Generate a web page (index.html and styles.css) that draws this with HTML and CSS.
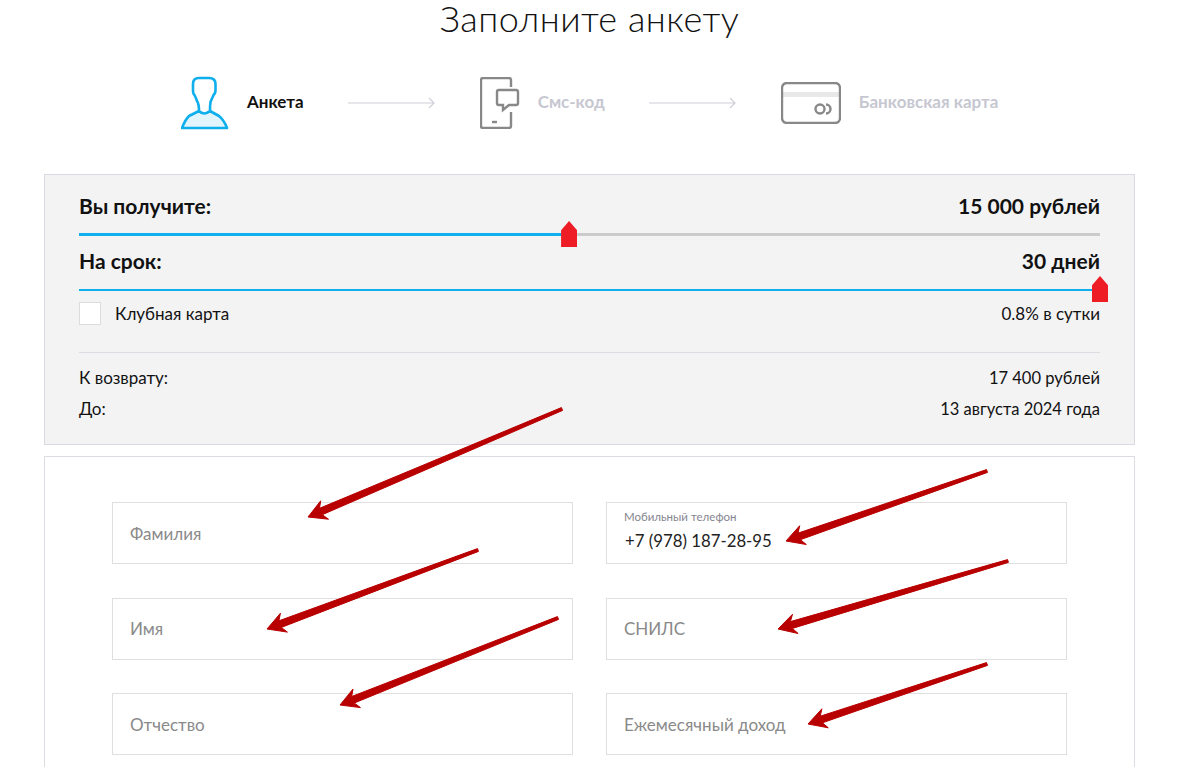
FILE: index.html
```html
<!DOCTYPE html>
<html>
<head>
    <meta charset="utf-8">
    <link rel="stylesheet" href="styles.css">
</head>
<body>
    <div class="page">
        <h1 class="title">Заполните анкету</h1>

        <div class="steps">
            <svg class="icon-person" viewBox="0 0 50 54">
                <path class="person-fill" d="M18 35 Q23 40 29 35 L38 40 Q43 44 46 52 L1 52 Q4 44 8 40 Z"/>
                <path class="icon-blue" d="M18 35 C18 31 18 28 16 25 C15 22 14 20 13.5 19 C12 18 12 16 12 14 L12 8 C12 4 14 2 18 2 L28 2 C32 2 34.5 4 34.5 8 L34.5 14 C34.5 17 34 18 32.5 19 C31.5 22 30 24 29.5 26 C29 29 29 32 29 35 L38 40 Q43 44 46 52 L1 52 Q4 44 8 40 L18 35 Q23 40 29 35"/>
            </svg>
            <span class="step-name active">Анкета</span>
            <svg class="step-arrow" viewBox="0 0 88 12">
                <path d="M0 6 H86 M81 1 L86 6 L81 11"/>
            </svg>
            <svg class="icon-phone" viewBox="0 0 40 52">
                <path class="icon-gray" d="M31 10 V3 Q31 1 29 1 H3 Q1 1 1 3 V49 Q1 51 3 51 H29 Q31 51 31 49 V35"/>
                <path class="icon-gray" d="M19 13 H36 Q38 13 38 15 V26 Q38 28 36 28 H29 L23 33 V28 H19 Q17 28 17 26 V15 Q17 13 19 13 Z"/>
                <path class="icon-gray" d="M12 45 H17"/>
            </svg>
            <span class="step-name">Смс-код</span>
            <svg class="step-arrow" viewBox="0 0 88 12">
                <path d="M0 6 H86 M81 1 L86 6 L81 11"/>
            </svg>
            <svg class="icon-card" viewBox="0 0 60 42">
                <rect class="card-stripe" x="1" y="10" width="58" height="5"/>
                <rect class="icon-gray" x="1" y="1" width="58" height="40" rx="5"/>
                <circle class="icon-gray" cx="39" cy="27" r="4.5"/>
                <path class="icon-gray" d="M45 22.5 A4.5 4.5 0 0 1 45 31.5"/>
            </svg>
            <span class="step-name">Банковская карта</span>
        </div>

        <div class="summary">
            <div class="slider-head">
                <span>Вы получите:</span>
                <span>15 000 рублей</span>
            </div>
            <div class="track track-amount">
                <div class="track-fill" style="width: 48%"></div>
                <div class="thumb" style="left: 48%"></div>
            </div>
            <div class="slider-head second">
                <span>На срок:</span>
                <span>30 дней</span>
            </div>
            <div class="track track-term">
                <div class="track-fill" style="width: 100%"></div>
                <div class="thumb" style="left: 100%"></div>
            </div>
            <div class="club">
                <label class="club-label"><span class="checkbox"></span>Клубная карта</label>
                <span>0.8% в сутки</span>
            </div>
            <div class="totals">
                <div class="total-row">
                    <span>К возврату:</span>
                    <span class="total-value">17 400 рублей</span>
                </div>
                <div class="total-row">
                    <span>До:</span>
                    <span class="total-value">13 августа 2024 года</span>
                </div>
            </div>
        </div>

        <div class="form-card">
            <div class="form-grid">
                <div class="field">Фамилия</div>
                <div class="field field-filled">
                    <span class="field-label">Мобильный телефон</span>
                    <span class="field-value">+7 (978) 187-28-95</span>
                </div>
                <div class="field">Имя</div>
                <div class="field">СНИЛС</div>
                <div class="field">Отчество</div>
                <div class="field">Ежемесячный доход</div>
            </div>
        </div>

        <svg class="arrows" viewBox="0 0 1180 767">
            <polygon points="562.6,410.4 322.3,514.7 328.5,519.2 308,517 320.7,500.8 319.5,508.3 561.4,407.6"/>
            <polygon points="987.5,472.4 800.4,539.7 806.3,544.5 786,541 799.7,525.7 798.1,533.1 986.5,469.6"/>
            <polygon points="478.5,551.4 281.3,627.4 287.4,632.1 267,629 280.4,613.3 278.9,620.8 477.5,548.6"/>
            <polygon points="1008.4,562.4 792.4,628.4 798.1,633.5 778,629 792.5,614.3 790.4,621.6 1007.6,559.6"/>
            <polygon points="558.6,619.4 354.3,703 360.4,707.6 340,705 353,689 351.7,696.5 557.4,616.6"/>
            <polygon points="987.5,665.4 822.4,722.8 828.3,727.8 808,724 821.9,708.8 820.2,716.2 986.5,662.6"/>
        </svg>
    </div>
</body>
</html>
```

FILE: styles.css
```css
body {
    margin: 0;
    background-color: #fff;
    font-family: "Lato", "Noto Sans", sans-serif;
    color: #111;
}

.page {
    position: relative;
    height: 767px;
    overflow: hidden;
    padding: 0 45px 0 44px;
    box-sizing: border-box;
}

.title {
    margin: 0;
    height: 36px;
    font-size: 36px;
    line-height: 36px;
    font-weight: 300;
    text-align: center;
    letter-spacing: 0.5px;
}

.steps {
    display: flex;
    align-items: center;
    height: 54px;
    margin-top: 40px;
    margin-bottom: 44px;
    padding-left: 137px;
}

.step-name {
    margin-bottom: 3px;
    font-size: 17px;
    font-weight: 700;
    color: #c6c7d1;
}

.step-name.active {
    color: #111;
}

.step-arrow {
    width: 88px;
    height: 12px;
    margin: 0 44px;
    fill: none;
    stroke: #cfcfd8;
    stroke-width: 1.2;
}

.icon-person {
    width: 50px;
    height: 54px;
    margin-right: 16px;
}

.icon-phone {
    width: 40px;
    height: 52px;
    margin-right: 18px;
}

.icon-card {
    width: 60px;
    height: 42px;
    margin-right: 18px;
}

.icon-blue {
    fill: none;
    stroke: #0faeec;
    stroke-width: 2.6;
    stroke-linejoin: round;
}

.person-fill {
    fill: #e2f5fd;
}

.icon-gray {
    fill: none;
    stroke: #888;
    stroke-width: 2.4;
}

.card-stripe {
    fill: #e8e8e8;
}

.summary {
    height: 271px;
    padding: 0 34px;
    box-sizing: border-box;
    border: 1px solid #d9d9e2;
    background-color: #f3f3f4;
}

.slider-head {
    display: flex;
    justify-content: space-between;
    margin-top: 18px;
    font-size: 21px;
    line-height: 26px;
    font-weight: 700;
}

.slider-head.second {
    margin-top: 12px;
}

.track {
    position: relative;
    height: 3px;
    margin-top: 14px;
    background-color: #cbcbcb;
}

.track-term {
    height: 2px;
    margin-top: 15px;
}

.track-fill {
    height: 100%;
    background-color: #0faeec;
}

.thumb {
    position: absolute;
    top: -12px;
    width: 16px;
    height: 26px;
    margin-left: -8px;
    background-color: #ee1c25;
    clip-path: polygon(50% 0, 100% 36%, 100% 100%, 0 100%, 0 36%);
}

.track-term .thumb {
    top: -13px;
    height: 26px;
}

.club {
    display: flex;
    justify-content: space-between;
    align-items: center;
    height: 23px;
    margin-top: 11px;
    font-size: 17px;
}

.club-label {
    display: flex;
    align-items: center;
}

.checkbox {
    width: 20px;
    height: 21px;
    margin-right: 14px;
    border: 1px solid #dcdcdc;
    background-color: #fff;
}

.totals {
    margin-top: 27px;
    padding-top: 9px;
    border-top: 1px solid #dcdce2;
}

.total-row {
    display: flex;
    justify-content: space-between;
    align-items: baseline;
    height: 31px;
    font-size: 17px;
    line-height: 31px;
}

.total-value {
    font-size: 16.5px;
}

.form-card {
    margin-top: 11px;
    height: 400px;
    padding: 45px 67px;
    border: 1px solid #dcdce2;
}

.form-grid {
    display: grid;
    grid-template-columns: 461px 461px;
    grid-auto-rows: 62px;
    column-gap: 33px;
    row-gap: 33.5px;
}

.field {
    display: flex;
    align-items: center;
    padding: 0 17px;
    box-sizing: border-box;
    border: 1px solid #dfdfdf;
    font-size: 17px;
    color: #8a8a8a;
}

.field-filled {
    flex-direction: column;
    align-items: flex-start;
    justify-content: flex-start;
}

.field-label {
    margin-top: 7px;
    font-size: 11.5px;
    line-height: 13px;
    color: #85858f;
}

.field-value {
    margin-top: 7px;
    margin-left: 1px;
    font-size: 16.8px;
    line-height: 22px;
    color: #222;
}

.arrows {
    position: absolute;
    top: 0;
    left: 0;
    width: 1180px;
    height: 767px;
    fill: #b90000;
    stroke: #b90000;
    stroke-width: 1;
    stroke-linejoin: round;
    pointer-events: none;
}
```
